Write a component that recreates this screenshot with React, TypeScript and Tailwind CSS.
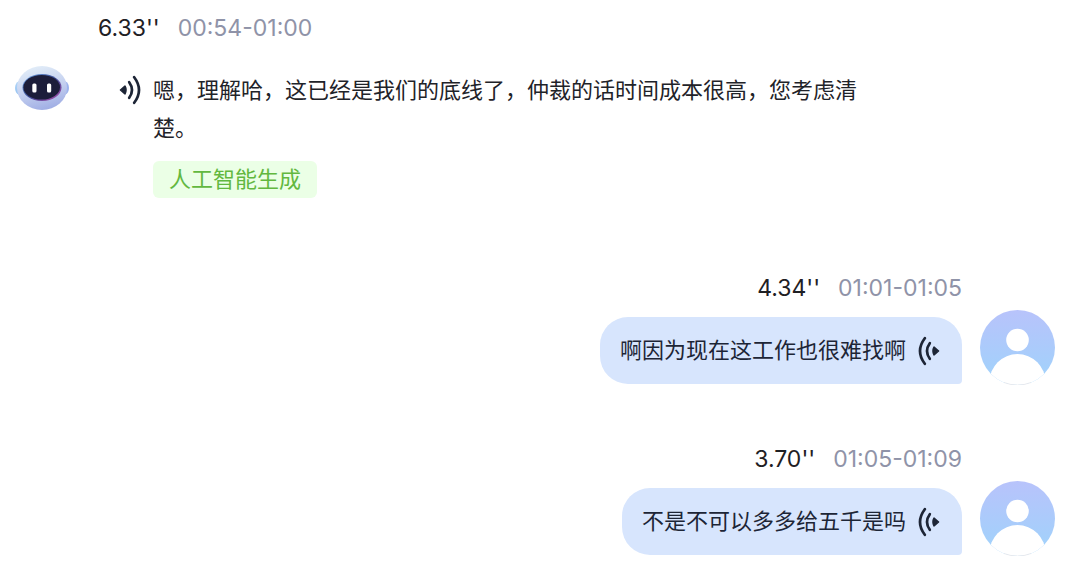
import React from 'react';

interface MessageType {
  id: number;
  role: 'robot' | 'user';
  duration: string;
  range: string;
  text: string;
  tag?: string;
}

const messages: MessageType[] = [
  {
    id: 1,
    role: 'robot',
    duration: "6.33''",
    range: '00:54-01:00',
    text: '嗯，理解哈，这已经是我们的底线了，仲裁的话时间成本很高，您考虑清楚。',
    tag: '人工智能生成',
  },
  {
    id: 2,
    role: 'user',
    duration: "4.34''",
    range: '01:01-01:05',
    text: '啊因为现在这工作也很难找啊',
  },
  {
    id: 3,
    role: 'user',
    duration: "3.70''",
    range: '01:05-01:09',
    text: '不是不可以多多给五千是吗',
  },
];

function RobotAvatar() {
  return (
    <svg className="h-11 w-14 shrink-0" viewBox="0 0 56 44" aria-hidden="true">
      <defs>
        <linearGradient id="robot-head" x1="0.3" y1="0" x2="0.6" y2="1">
          <stop offset="0" stopColor="#e2edf8" />
          <stop offset="0.5" stopColor="#c6d2f0" />
          <stop offset="1" stopColor="#9fade4" />
        </linearGradient>
        <linearGradient id="robot-ear-left" x1="0" y1="0" x2="0" y2="1">
          <stop offset="0" stopColor="#b4d6f7" />
          <stop offset="1" stopColor="#93c2f2" />
        </linearGradient>
        <linearGradient id="robot-rim" x1="0" y1="0" x2="1" y2="1">
          <stop offset="0" stopColor="#6fa8e8" />
          <stop offset="0.5" stopColor="#3a4a94" />
          <stop offset="1" stopColor="#b04aa8" />
        </linearGradient>
      </defs>
      <path d="M5 15Q1 17 1 22T5 29Z" fill="url(#robot-ear-left)" />
      <path d="M51 15Q55 17 55 22T51 29Z" fill="#9db4ee" />
      <ellipse cx="28" cy="22" rx="25" ry="22" fill="url(#robot-head)" />
      <ellipse cx="28" cy="21.5" rx="19.5" ry="13.5" fill="url(#robot-rim)" />
      <ellipse cx="27.7" cy="21.3" rx="18.3" ry="12.3" fill="#1c1d3a" />
      <rect x="18.3" y="17.5" width="4.2" height="9" rx="1.5" fill="#fff" />
      <rect x="33" y="17.5" width="4.2" height="9" rx="1.5" fill="#fff" />
    </svg>
  );
}

function UserAvatar() {
  return (
    <svg className="size-[75px] shrink-0" viewBox="0 0 75 75" aria-hidden="true">
      <defs>
        <linearGradient id="user-bg" x1="0" y1="0" x2="0" y2="1">
          <stop offset="0" stopColor="#b8c3fb" />
          <stop offset="0.75" stopColor="#a5cffb" />
          <stop offset="1" stopColor="#a3d6fd" />
        </linearGradient>
        <clipPath id="user-clip">
          <circle cx="37.5" cy="37.5" r="37.5" />
        </clipPath>
      </defs>
      <g clipPath="url(#user-clip)">
        <rect width="75" height="75" fill="url(#user-bg)" />
        <circle cx="37.5" cy="30" r="11.3" fill="#fff" />
        <ellipse cx="37.5" cy="72" rx="28" ry="28" fill="#fff" />
      </g>
      <path d="M24 72.5A37.3 37.3 0 0 0 51 72.5" fill="none" stroke="#e4e6ea" strokeWidth="0.8" />
    </svg>
  );
}

// Sound waves; the user's side shows them mirrored
function PlayButton({ flipped }: { flipped: boolean }) {
  return (
    <button type="button" aria-label="播放" className="shrink-0 cursor-pointer text-[#1d2536]">
      <svg
        className={flipped ? 'h-[30px] w-[22px] -scale-x-100' : 'h-[30px] w-[22px]'}
        viewBox="0 0 22 30"
        fill="none"
        stroke="currentColor"
        strokeWidth="2.7"
        strokeLinecap="round"
      >
        <path d="M1.5 15L6 11.2Q8 15 6 18.8Z" fill="currentColor" strokeWidth="1.6" strokeLinejoin="round" />
        <path d="M10.2 7.2Q15.8 15 10.2 22.8" />
        <path d="M15.2 2.2Q24.8 15 15.2 27.8" />
      </svg>
    </button>
  );
}

function MessageHeader({ duration, range }: { duration: string; range: string }) {
  return (
    <div className="flex gap-[18px] text-[23px] leading-7">
      <span className="text-[#1f2024]">{duration}</span>
      <span className="text-[#8f93a8]">{range}</span>
    </div>
  );
}

function RobotMessage({ message }: { message: MessageType }) {
  return (
    <div className="flex items-start gap-7">
      <div className="pt-13">
        <RobotAvatar />
      </div>
      <div className="flex flex-col items-start">
        <MessageHeader duration={message.duration} range={message.range} />
        <div className="flex items-start gap-3 px-[21px] pt-[29px]">
          <div className="flex h-[38px] items-center">
            <PlayButton flipped={false} />
          </div>
          <div className="flex max-w-[720px] flex-col items-start gap-[14px]">
            <p className="text-[22px] leading-[38px] text-[#1f2329]">{message.text}</p>
            {message.tag && (
              <span className="rounded-md bg-[#ebffe6] px-4 text-[22px] leading-[37px] text-[#62b83f]">
                {message.tag}
              </span>
            )}
          </div>
        </div>
      </div>
    </div>
  );
}

function UserMessage({ message }: { message: MessageType }) {
  return (
    <div className="flex items-end justify-end gap-[18px] pr-[11px]">
      <div className="flex flex-col items-end gap-[15px] pb-px">
        <MessageHeader duration={message.duration} range={message.range} />
        <div className="flex items-center gap-3 rounded-[28px] rounded-br-sm bg-[#d7e5fd] py-[15px] pr-[22px] pl-5">
          <p className="text-[22px] leading-[37px] text-[#1d2536]">{message.text}</p>
          <PlayButton flipped />
        </div>
      </div>
      <UserAvatar />
    </div>
  );
}

export default function App() {
  return (
    <main className="flex min-h-screen flex-col bg-white px-[14px] pt-[14px] pb-6 font-[Inter,'Noto_Sans_CJK_SC',sans-serif]">
      <RobotMessage message={messages[0]} />
      <div className="mt-[76px] flex flex-col gap-[60px]">
        {messages.slice(1).map((message) => (
          <UserMessage key={message.id} message={message} />
        ))}
      </div>
    </main>
  );
}
